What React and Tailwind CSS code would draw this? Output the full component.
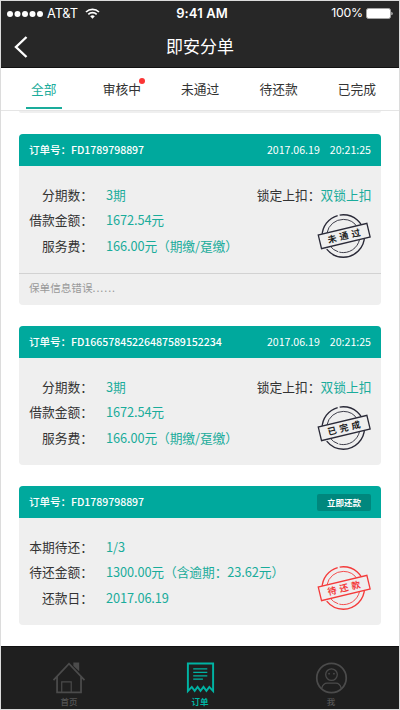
const TABS = [
  { label: '全部', active: true },
  { label: '审核中', dot: true },
  { label: '未通过' },
  { label: '待还款' },
  { label: '已完成' },
];

const INSTALLMENT_ROWS = [
  ['分期数：', '3期'],
  ['借款金额：', '1672.54元'],
  ['服务费：', '166.00元（期缴/趸缴）'],
];

const ORDERS = [
  { id: 'FD1789798897', time: true, rows: INSTALLMENT_ROWS, lock: true, stamp: '未通过', note: '保单信息错误' },
  { id: 'FD16657845226487589152234', time: true, rows: INSTALLMENT_ROWS, lock: true, stamp: '已完成' },
  {
    id: 'FD1789798897',
    rows: [
      ['本期待还：', '1/3'],
      ['待还金额：', '1300.00元（含逾期：23.62元）'],
      ['还款日：', '2017.06.19'],
    ],
    stamp: '待还款',
    red: true,
  },
];

function Stamp({ text, red }) {
  const ink = red ? '#f43b3b' : '#2a2a38';
  return (
    <svg className="absolute top-[45px] right-[9px] h-[50px] w-[56px]" viewBox="0 0 56 50" fill="none" stroke={ink}>
      <circle cx="27.3" cy="25" r="21.2" strokeWidth="1.4" strokeDasharray="52 1.5 40 2 34 3" />
      <circle cx="27.3" cy="25" r="16.6" strokeWidth="0.9" strokeDasharray="30 1 22 2 40 1" />
      <g transform="rotate(-13.5 28.2 25)">
        <rect x="3.2" y="18" width="50" height="14" fill="#efefef" strokeWidth="1.3" />
        <text
          x="29.5"
          y="28.3"
          textAnchor="middle"
          fill={red ? ink : '#222'}
          stroke="none"
          fontSize="9"
          fontWeight="700"
          letterSpacing="3.2"
        >
          {text}
        </text>
      </g>
    </svg>
  );
}

function OrderCard({ order }) {
  return (
    <article className="overflow-hidden rounded-[4px] bg-[#efefef]">
      <header className="flex h-8 items-center justify-between bg-[#00a99d] pr-[10px] pl-[10px] text-[10.6px] font-medium text-white">
        <span className="tracking-[-0.07px]">订单号：{order.id}</span>
        {order.time ? (
          <span className="flex gap-[10px] font-normal">
            <span>2017.06.19</span>
            <span>20:21:25</span>
          </span>
        ) : (
          <button className="h-[17px] w-[54px] rounded-[2px] bg-[#00877d] text-[8.5px] leading-[17px] font-bold">立即还款</button>
        )}
      </header>
      <div className="relative h-[107px] pt-[15.5px] text-[12.75px] leading-[25.5px]">
        {order.rows.map(([label, value]) => (
          <div key={label} className="flex">
            <span className="w-[74px] text-right text-[#333]">{label}</span>
            <span className="ml-[13px] tracking-[-0.09px] text-[#1aac9b]">{value}</span>
          </div>
        ))}
        {order.lock && (
          <div className="absolute top-[15.5px] right-[9.5px] text-[#333]">
            锁定上扣：<span className="text-[#1aac9b]">双锁上扣</span>
          </div>
        )}
        <Stamp text={order.stamp} red={order.red} />
      </div>
      {order.note && (
        <p className="h-8 border-t border-[#d2d2d2] pl-[10px] text-[10.6px] leading-[27px] text-[#999]">
          {order.note}
          <span className="tracking-[0.95px]">......</span>
        </p>
      )}
    </article>
  );
}

function StatusBar() {
  return (
    <div className="relative flex h-[25px] items-center justify-between pr-[6px] pl-[6px] font-['Inter',sans-serif] text-[13px] text-white">
      <div className="flex items-center">
        <svg width="37" height="8" fill="#fff">
          <circle cx="3" cy="4" r="3" />
          <circle cx="10.5" cy="4" r="3" />
          <circle cx="18" cy="4" r="3" />
          <circle cx="25.5" cy="4" r="3" />
          <circle cx="33" cy="4" r="3" />
        </svg>
        <span className="ml-[3px] text-[12.8px] tracking-[-0.1px]">AT&amp;T</span>
        <svg className="ml-[7px]" width="15" height="11" viewBox="0 0 15 11" fill="none" stroke="#fff" strokeWidth="1.7">
          <path d="M1 4a9.2 9.2 0 0 1 13 0M3.3 6.4a6 6 0 0 1 8.4 0" />
          <path d="M7.5 10.7 5.2 8.3a3.3 3.3 0 0 1 4.6 0z" fill="#fff" stroke="none" />
        </svg>
      </div>
      <span className="absolute left-[201px] -translate-x-1/2 font-semibold tracking-[0.1px] whitespace-nowrap">9:41 AM</span>
      <div className="flex items-center">
        <span className="text-[12.3px] tracking-[-0.2px]">100%</span>
        <svg className="ml-[3px]" width="27" height="11" viewBox="0 0 27 11">
          <rect x="0.5" y="0.5" width="24" height="10" rx="2" fill="#fff" stroke="#a5a5a5" />
          <path d="M25.5 3.7c1.4.4 1.4 3.2 0 3.6z" fill="#fff" />
        </svg>
      </div>
    </div>
  );
}

function HomeIcon() {
  return (
    <svg width="34" height="33" viewBox="0 0 34 33" fill="none" stroke="#4b4b4b" strokeWidth="1.8">
      <path d="M1 18.7 17 1.8l16 16.9M4.7 15v16.2h24.7V15" />
      <path d="M9.5 31V20.5h9.8V31" strokeWidth="1.2" />
      <path d="M21.5 0.5h6v9L21.5 4z" fill="#4b4b4b" stroke="none" />
    </svg>
  );
}

function OrdersIcon() {
  return (
    <svg width="29" height="33" viewBox="0 0 29 33" fill="none" stroke="#00b3a3" strokeWidth="2">
      <path d="M1.5 30V1.5h26V30l-3.9-4.3-3 4-3-4-3.1 4-3-4-3 4-3-4z" />
      <path d="M7 7h14.5M7 10.7h14.5M7 14.2h14.5M7 17.7h10" strokeWidth="1.3" />
    </svg>
  );
}

function ProfileIcon() {
  return (
    <svg width="33" height="33" viewBox="0 0 33 33" fill="none" stroke="#4b4b4b" strokeWidth="1.8">
      <circle cx="16.5" cy="16.5" r="15.2" />
      <circle cx="16.5" cy="13" r="6" strokeWidth="1.3" />
      <path d="M6.5 27c1-3.8 3-5.2 5.5-5.2h9c2.5 0 4.5 1.4 5.5 5.2" strokeWidth="1.3" />
      <circle cx="14" cy="12" r="0.9" fill="#4b4b4b" stroke="none" />
      <circle cx="19" cy="12" r="0.9" fill="#4b4b4b" stroke="none" />
    </svg>
  );
}

function NavItem({ icon, label, active }) {
  return (
    <a className={`flex w-[131px] flex-col items-center pt-[15px] text-[8.5px] leading-[15px] ${active ? 'font-bold text-[#00b3a3]' : 'font-medium text-[#555]'}`}>
      {icon}
      <span>{label}</span>
    </a>
  );
}

export default function App() {
  return (
    <div className="flex h-[710px] w-[400px] flex-col overflow-hidden border border-[#dcdcdc] bg-white font-['Noto_Sans_CJK_SC',sans-serif]">
      <div className="h-[67px] shrink-0 border-b border-[#111] bg-[#272727]">
        <StatusBar />
        <div className="relative flex h-[42px] items-center justify-center text-[17px] text-white">
          <svg className="absolute top-[10px] left-[13px]" width="14" height="22" fill="none" stroke="#fff" strokeWidth="2.4">
            <path d="M12.5 1 2 11l10.5 10" />
          </svg>
          <h1 className="pb-[2px]">即安分单</h1>
        </div>
      </div>

      <nav className="flex h-[43px] shrink-0 border-b border-[#e5e5e5] pl-[3.5px] text-[12.75px]">
        {TABS.map((tab) => (
          <div key={tab.label} className="flex w-[78.3px] shrink-0 justify-center">
            <span
              className={`relative flex h-[41px] items-center justify-center border-b-2 pt-[3px] ${tab.active ? 'w-[36px] border-[#1aac9b] text-[#1aac9b]' : 'border-transparent text-[#333]'}`}
            >
              {tab.label}
              {tab.dot && <i className="absolute top-[10px] -right-[4px] size-[6px] rounded-full bg-[#fb3535]" />}
            </span>
          </div>
        ))}
      </nav>

      <main className="flex flex-1 flex-col gap-[21px] px-[18px]">
        <div className="h-[2px] shrink-0 rounded-b-[4px] bg-[#efefef]" />
        {ORDERS.map((order) => (
          <OrderCard key={order.stamp} order={order} />
        ))}
      </main>

      <footer className="flex h-[63px] shrink-0 justify-center border-t border-[#111] bg-[#1f1f1f]">
        <NavItem icon={<HomeIcon />} label="首页" />
        <NavItem icon={<OrdersIcon />} label="订单" active />
        <NavItem icon={<ProfileIcon />} label="我" />
      </footer>
    </div>
  );
}
